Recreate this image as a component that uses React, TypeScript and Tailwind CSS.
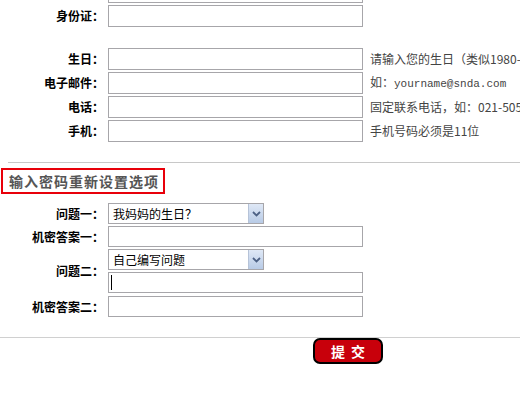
import React from 'react';

const font = { fontFamily: '"Noto Sans CJK SC", "Liberation Sans", sans-serif' };

const Label = ({ children }: { children?: string }) => (
  <div className="w-[104px] shrink-0 text-right text-[12px] font-bold text-black leading-none whitespace-nowrap">{children}</div>
);

const Field = ({ label, hint }: { label?: string; hint?: React.ReactNode }) => (
  <div className="flex items-center h-[22px]">
    <Label>{label}</Label>
    <div className="ml-[4px] w-[255px] h-[22px] border border-[#a7a6aa] bg-white shrink-0" />
    {hint && <div className="ml-[7px] shrink-0 text-[12px] text-[#444] whitespace-nowrap leading-none">{hint}</div>}
  </div>
);

const Select = ({ value }: { value: string }) => (
  <div className="w-[156px] h-[21px] border border-[#a7a6aa] bg-white flex items-center justify-between shrink-0">
    <span className="pl-[4px] text-[12px] text-black leading-none">{value}</span>
    <span className="w-[15px] h-[19px] bg-gradient-to-b from-[#dfe8f6] to-[#b8cbe6] border-l border-[#b6c3d8] flex items-center justify-center">
      <svg width="9" height="6" viewBox="0 0 9 6">
        <path d="M1 1 L4.5 4.5 L8 1" stroke="#4d6185" strokeWidth="1.8" fill="none" />
      </svg>
    </span>
  </div>
);

const Input = ({ caret }: { caret?: boolean }) => (
  <div className="w-[255px] h-[21px] border border-[#a7a6aa] bg-white flex items-center shrink-0">
    {caret && <span className="ml-[2px] w-[1px] h-[15px] bg-black" />}
  </div>
);

export default function App() {
  return (
    <div className="w-[520px] h-[400px] bg-white overflow-hidden" style={font}>
      {/* Personal info */}
      <div className="-mt-[19px] flex flex-col gap-[2px]">
        <Field />
        <Field label="身份证：" />
      </div>
      <div className="mt-[21px] flex flex-col gap-[2px]">
        <Field label="生日：" hint="请输入您的生日（类似1980-01-01）" />
        <Field
          label="电子邮件："
          hint={
            <span>
              如：<span style={{ fontFamily: '"Liberation Mono", monospace' }} className="text-[11px]">yourname@snda.com</span>
            </span>
          }
        />
        <Field label="电话：" hint="固定联系电话，如：021-50504740" />
        <Field label="手机：" hint="手机号码必须是11位" />
      </div>

      <div className="mt-[20px] ml-[8px] h-[1px] bg-[#c8c8c8]" />

      {/* Password reset section */}
      <div className="mt-[5px] ml-[1px] w-[164px] h-[26px] border-2 border-[#e8000a] flex items-center pl-[6px]">
        <span className="text-[14px] font-bold text-[#555] tracking-[1px] leading-none whitespace-nowrap">输入密码重新设置选项</span>
      </div>

      <div className="mt-[9px] flex flex-col gap-[2px]">
        <div className="flex items-center">
          <Label>问题一：</Label>
          <div className="ml-[4px]">
            <Select value="我妈妈的生日？" />
          </div>
        </div>
        <div className="flex items-center">
          <Label>机密答案一：</Label>
          <div className="ml-[4px]">
            <Input />
          </div>
        </div>
        <div className="flex items-center">
          <Label>问题二：</Label>
          <div className="ml-[4px] flex flex-col gap-[2px]">
            <Select value="自己编写问题" />
            <Input caret />
          </div>
        </div>
        <div className="flex items-center mt-[1px]">
          <Label>机密答案二：</Label>
          <div className="ml-[4px]">
            <Input />
          </div>
        </div>
      </div>

      <div className="mt-[20px] h-[1px] bg-[#d0d0d0]" />

      <div className="flex">
        <button className="ml-[313px] w-[70px] h-[26px] rounded-[7px] border-2 border-black bg-[#c8000b] text-white text-[14px] font-bold tracking-[6px] pl-[6px] leading-none flex items-center justify-center">
          提交
        </button>
      </div>
    </div>
  );
}
